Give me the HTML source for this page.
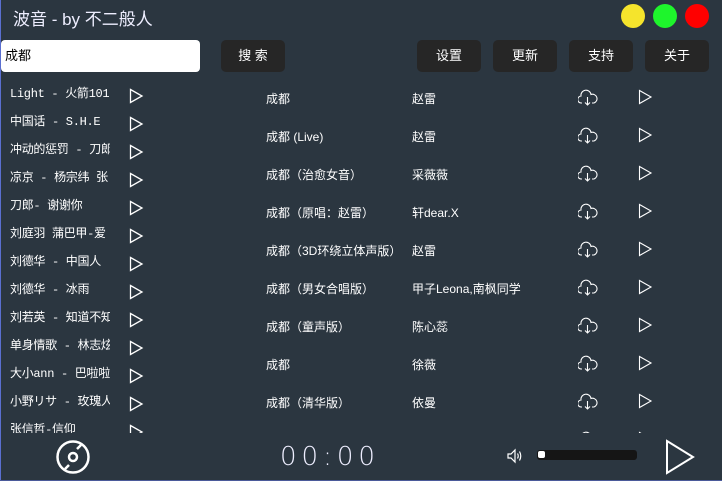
<!DOCTYPE html>
<html><head><meta charset="utf-8"><style>
*{margin:0;padding:0;box-sizing:border-box}
body{width:722px;height:481px;background:#2b3640;overflow:hidden;position:relative;font-family:"Liberation Sans","Noto Sans CJK SC",sans-serif;color:#fff}
.edge{position:absolute;left:0;top:0;width:1px;height:481px;background:#5a6fd0}
.edgeb{position:absolute;left:0;bottom:0;width:722px;height:1px;background:#4b5a9a}
.title{position:absolute;left:13px;top:5px;font-size:17px;color:#eef}
.dot{position:absolute;top:4px;width:24px;height:24px;border-radius:50%}
.search{position:absolute;left:1px;top:40px;width:199px;height:32px;background:#fff;border-radius:4px;color:#000;font-size:13px;padding:9px 4px;line-height:14px}
.btn{position:absolute;top:40px;height:32px;width:64px;background:#262626;border-radius:5px;font-size:13px;text-align:center;line-height:32px}
.left{position:absolute;left:0;top:80px;width:150px;height:353px;overflow:hidden}
.li{position:absolute;left:10px;font-size:12px;white-space:nowrap;width:100px;overflow:hidden;font-family:"Liberation Mono","Noto Sans CJK SC",monospace;letter-spacing:-.3px}
.mid{position:absolute;left:250px;top:78px;width:472px;height:355px;overflow:hidden}
.t{position:absolute;left:16px;font-size:12px;white-space:nowrap}
.a{position:absolute;left:162px;font-size:12px;white-space:nowrap}
.time{position:absolute;left:280px;top:442px;font-size:26px;letter-spacing:5px;color:#eef;font-family:"DejaVu Sans",sans-serif;font-weight:300}
.bar{position:absolute;left:537px;top:450px;width:100px;height:10px;background:#151515;border-radius:3px}
.knob{position:absolute;left:538px;top:451px;width:7px;height:7px;background:#fff;border-radius:2px}
</style></head><body>
<div class="edge"></div><div class="edgeb"></div>
<div class="title">波音 - by 不二般人</div>
<div class="dot" style="left:621px;background:#f5e42c"></div>
<div class="dot" style="left:653px;background:#1ef52c"></div>
<div class="dot" style="left:685px;background:#ff0000"></div>
<div class="search">成都</div>
<div class="btn" style="left:221px">搜 索</div>
<div class="btn" style="left:417px">设置</div>
<div class="btn" style="left:493px">更新</div>
<div class="btn" style="left:569px">支持</div>
<div class="btn" style="left:645px">关于</div>

<div class="left">
<div class="li" style="top:4px">Light - 火箭101</div>
<div class="li" style="top:32px">中国话 - S.H.E</div>
<div class="li" style="top:60px">冲动的惩罚 - 刀郎</div>
<div class="li" style="top:88px">凉京 - 杨宗纬 张</div>
<div class="li" style="top:116px">刀郎- 谢谢你</div>
<div class="li" style="top:144px">刘庭羽 蒲巴甲-爱</div>
<div class="li" style="top:172px">刘德华 - 中国人</div>
<div class="li" style="top:200px">刘德华 - 冰雨</div>
<div class="li" style="top:228px">刘若英 - 知道不知道</div>
<div class="li" style="top:256px">单身情歌 - 林志炫</div>
<div class="li" style="top:284px">大小ann - 巴啦啦</div>
<div class="li" style="top:312px">小野リサ - 玫瑰人生</div>
<div class="li" style="top:340px">张信哲-信仰</div>
<svg style="position:absolute;left:129px;top:8px" width="16" height="350" fill="none" stroke="#fff" stroke-width="1.3">
<g id="pl"><path d="M1.5 1.5L13 8L1.5 14.5Z"/></g>
<use href="#pl" y="28"/><use href="#pl" y="56"/><use href="#pl" y="84"/><use href="#pl" y="112"/><use href="#pl" y="140"/><use href="#pl" y="168"/><use href="#pl" y="196"/><use href="#pl" y="224"/><use href="#pl" y="252"/><use href="#pl" y="280"/><use href="#pl" y="308"/><use href="#pl" y="336"/>
</svg>
</div>

<div class="mid">
<div class="t" style="top:12px">成都</div><div class="a" style="top:12px">赵雷</div>
<div class="t" style="top:50px">成都 (Live)</div><div class="a" style="top:50px">赵雷</div>
<div class="t" style="top:88px">成都（治愈女音）</div><div class="a" style="top:88px">采薇薇</div>
<div class="t" style="top:126px">成都（原唱：赵雷）</div><div class="a" style="top:126px">轩dear.X</div>
<div class="t" style="top:164px">成都（3D环绕立体声版）</div><div class="a" style="top:164px">赵雷</div>
<div class="t" style="top:202px">成都（男女合唱版）</div><div class="a" style="top:202px">甲子Leona,南枫同学</div>
<div class="t" style="top:240px">成都（童声版）</div><div class="a" style="top:240px">陈心蕊</div>
<div class="t" style="top:278px">成都</div><div class="a" style="top:278px">徐薇</div>
<div class="t" style="top:316px">成都（清华版）</div><div class="a" style="top:316px">依曼</div>
<svg style="position:absolute;left:328px;top:11px" width="80" height="360" fill="none" stroke="#fff" stroke-width="1.1">
<g id="rw"><path d="M4 14H3.5A3.5 3.5 0 0 1 3 7A5 5 0 0 1 13 5.5A4 4 0 0 1 16 14H14"/><path d="M9.5 8V16M7 13.5L9.5 16L12 13.5"/><path d="M61.5 1.5L73 8L61.5 14.5Z"/></g>
<use href="#rw" y="38"/><use href="#rw" y="76"/><use href="#rw" y="114"/><use href="#rw" y="152"/><use href="#rw" y="190"/><use href="#rw" y="228"/><use href="#rw" y="266"/><use href="#rw" y="304"/><use href="#rw" y="342"/>
</svg>
</div>

<svg style="position:absolute;left:54px;top:438px" width="38" height="38" fill="none" stroke="#fff" stroke-width="2.5">
<circle cx="19" cy="19" r="15.5"/><circle cx="19" cy="19" r="4"/><path d="M23 11L27 7M15 27L11 31"/>
</svg>
<div class="time">00:00</div>
<svg style="position:absolute;left:506px;top:447px" width="18" height="18" fill="none" stroke="#fff" stroke-width="1.2">
<path d="M2 7H5L9 3V15L5 11H2Z"/><path d="M11.5 6.5Q13 9 11.5 11.5M13.5 4.5Q16 9 13.5 13.5"/>
</svg>
<div class="bar"></div><div class="knob"></div>
<svg style="position:absolute;left:664px;top:439px" width="32" height="36" fill="none" stroke="#fff" stroke-width="2">
<path d="M3 2L29 18L3 34Z"/>
</svg>
</body></html>
